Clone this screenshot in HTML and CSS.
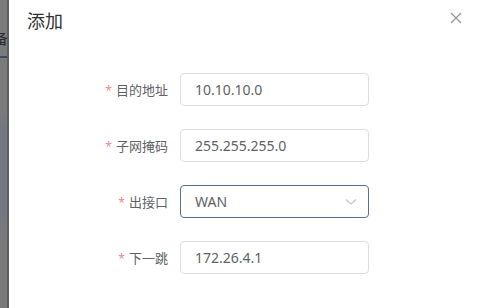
FILE: index.html
```html
<!DOCTYPE html>
<html lang="zh">
<head>
<meta charset="utf-8">
<link rel="stylesheet" href="styles.css">
</head>
<body>
<div class="page">
  <div class="backdrop">
    <span class="bg-glyph">备</span>
    <span class="bg-line"></span>
  </div>
  <div class="dialog">
    <div class="dialog-header">
      <span class="dialog-title">添加</span>
      <button class="close" aria-label="关闭">
        <svg width="12" height="12" viewBox="0 0 12 12"><path d="M1 1 L11 11 M11 1 L1 11" stroke="#909399" stroke-width="1.2" fill="none"/></svg>
      </button>
    </div>
    <form class="form">
      <div class="row">
        <label class="label"><span class="req">*</span>目的地址</label>
        <div class="input">10.10.10.0</div>
      </div>
      <div class="row">
        <label class="label"><span class="req">*</span>子网掩码</label>
        <div class="input">255.255.255.0</div>
      </div>
      <div class="row">
        <label class="label"><span class="req">*</span>出接口</label>
        <div class="input select">WAN
          <svg class="arrow" width="12" height="8" viewBox="0 0 12 8"><path d="M1 1.5 L6 6 L11 1.5" stroke="#c0c4cc" stroke-width="1.1" fill="none"/></svg>
        </div>
      </div>
      <div class="row">
        <label class="label"><span class="req">*</span>下一跳</label>
        <div class="input">172.26.4.1</div>
      </div>
    </form>
  </div>
</div>
</body>
</html>
```

FILE: styles.css
```css
html, body {
  margin: 0;
  padding: 0;
  background: #fff;
}
body {
  font-family: "Noto Sans", "Noto Sans CJK SC", sans-serif;
  width: 482px;
  height: 308px;
  overflow: hidden;
}
.page {
  display: flex;
  height: 308px;
}
.backdrop {
  width: 7px;
  flex: none;
  background: linear-gradient(#7b7b7b 0, #7b7b7b 110px, #747781 130px, #747781 210px, #7a7a7a 240px);
  border-right: 2px solid #5e5e5e;
  position: relative;
  overflow: hidden;
}
.bg-glyph {
  position: absolute;
  left: -7px;
  top: 28px;
  font-size: 15px;
  color: #2a2a2a;
  line-height: 20px;
}
.bg-line {
  position: absolute;
  left: 0;
  right: 0;
  top: 56px;
  height: 2px;
  background: #3c4a66;
}
.dialog {
  flex: 1;
  background: #fff;
}
.dialog-header {
  display: flex;
  align-items: flex-start;
  justify-content: space-between;
  padding: 9px 20px 0 18px;
  height: 64px;
  box-sizing: border-box;
}
.dialog-title {
  font-size: 18px;
  line-height: 24px;
  color: #303133;
}
.close {
  border: none;
  background: none;
  padding: 0;
  margin-top: 3px;
  width: 12px;
  height: 12px;
  display: flex;
}
.form {
  display: flex;
  flex-direction: column;
  gap: 23px;
  margin-top: 9px;
}
.row {
  display: flex;
  align-items: center;
}
.label {
  width: 171px;
  box-sizing: border-box;
  padding-right: 12px;
  text-align: right;
  font-size: 13px;
  color: #606266;
}
.req {
  color: #f08a8a;
  margin-right: 4px;
  font-size: 12px;
}
.input {
  width: 189px;
  height: 33px;
  box-sizing: border-box;
  border: 1px solid #dcdfe6;
  border-radius: 4px;
  padding: 0 14px;
  font-size: 14px;
  line-height: 31px;
  color: #606266;
  display: flex;
  align-items: center;
  justify-content: space-between;
}
.select {
  border-color: #5a6f98;
  padding-right: 11px;
}
.arrow {
  display: block;
}
```
